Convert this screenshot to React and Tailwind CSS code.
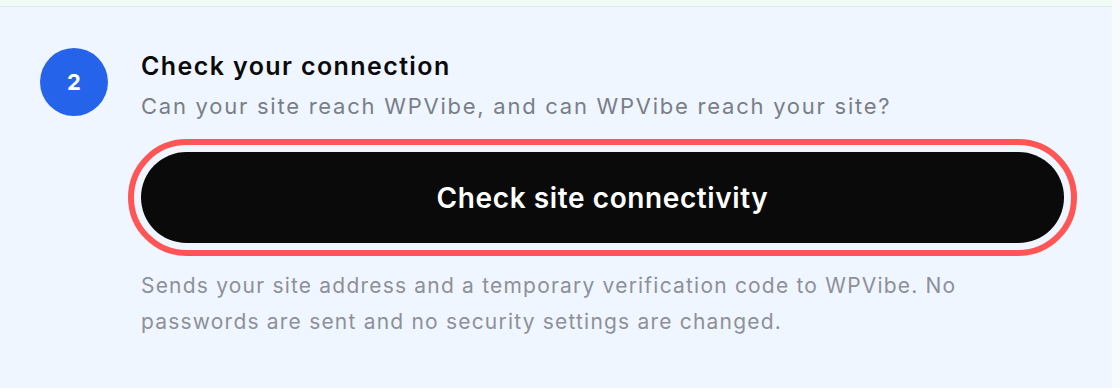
import React from 'react';

const font = { fontFamily: 'Inter, "Noto Sans", sans-serif' };

const StepBadge = ({ n }) => (
  <div className="flex h-[68px] w-[68px] shrink-0 items-center justify-center rounded-full bg-[#2563eb] text-[22px] font-bold text-white">
    {n}
  </div>
);

export default function App() {
  return (
    <div className="min-h-[388px] w-[1120px] bg-[#f8fafc]" style={font}>
      <div className="w-[1112px]">
        <div className="h-[7px] border-b border-[#e3e8ee] bg-[#f0fdf4]" />
        <div className="flex h-[381px] gap-[33px] bg-[#eff6ff] px-[40px] pt-[41px]">
          <StepBadge n="2" />
          <div className="flex w-[923px] flex-col pt-[2px]">
            <h2 className="text-[25px] leading-[32px] font-semibold tracking-[1.4px] text-[#0a0a0a]">
              Check your connection
            </h2>
            <p className="mt-[9px] text-[22px] leading-[30px] tracking-[1.75px] text-[#7a7e87]">
              Can your site reach WPVibe, and can WPVibe reach your site?
            </p>
            <button
              type="button"
              className="mt-[31px] h-[91px] w-full rounded-full bg-[#0a0a0a] text-[28px] font-semibold tracking-[0.6px] text-white outline-6 outline-offset-7 outline-[#ff5555] outline-solid"
            >
              Check site connectivity
            </button>
            <p className="mt-[25px] text-[21px] leading-[36px] tracking-[1.2px] text-[#8e9099]">
              Sends your site address and a temporary verification code to WPVibe. No passwords are sent and no security
              settings are changed.
            </p>
          </div>
        </div>
      </div>
    </div>
  );
}
